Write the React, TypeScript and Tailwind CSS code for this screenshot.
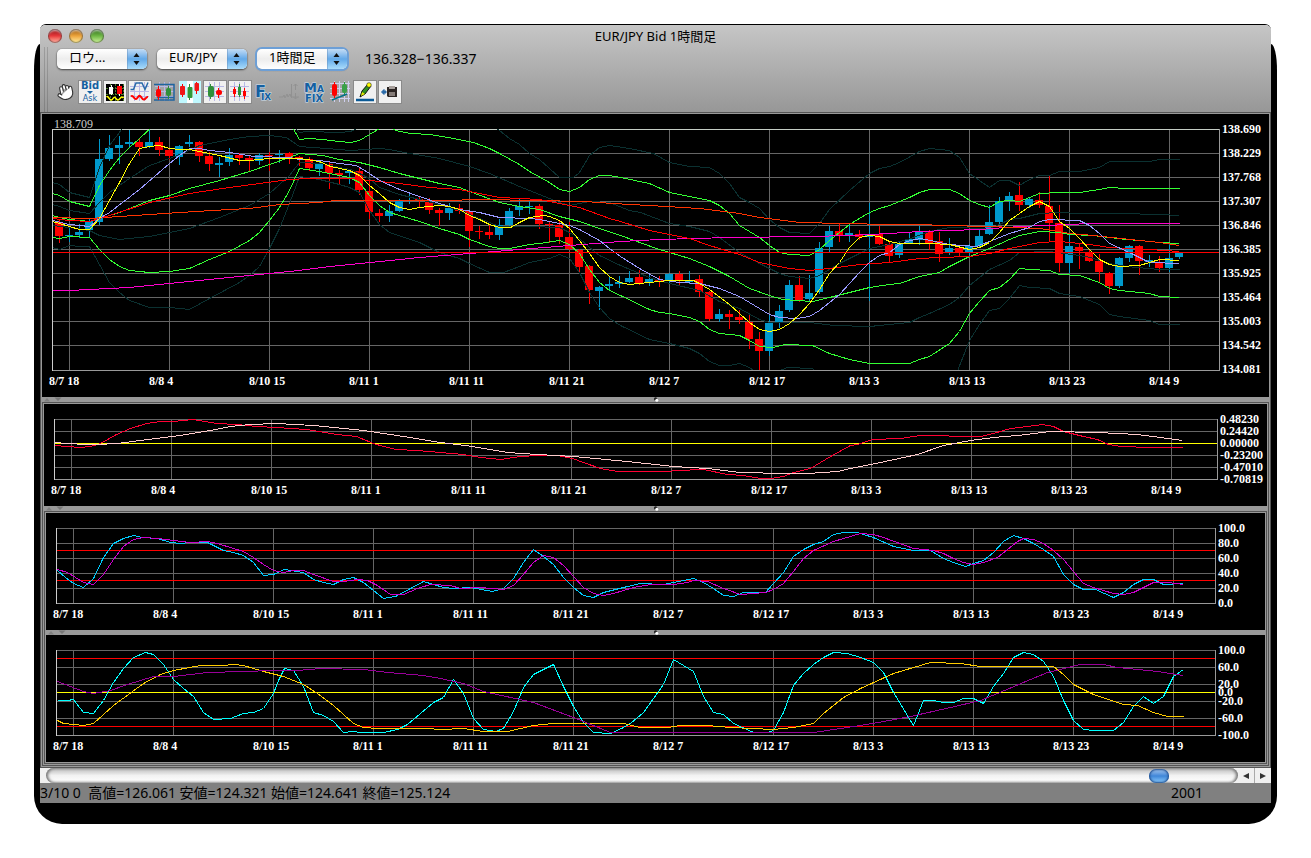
import React from "react";
import type { ReactNode } from "react";
import { Hand } from "lucide-react";

// up / down candles: [type, body top, body bottom, high, low], one every 10px
type Candle = ["u" | "d", number, number, number, number];

const CANDLES: Candle[] = [
  ["d", 222, 236, 220, 243], ["u", 235, 236, 227, 242], ["u", 232, 235, 224, 238], ["u", 221, 230, 219, 237],
  ["u", 159, 222, 139, 225], ["u", 148, 159, 135, 161], ["u", 145, 148, 136, 164], ["u", 142, 144, 130, 147],
  ["d", 142, 147, 138, 156], ["u", 142, 147, 130, 148], ["d", 142, 150, 137, 156], ["d", 150, 156, 148, 160],
  ["u", 146, 157, 145, 165], ["u", 142, 144, 135, 147], ["d", 142, 156, 141, 162], ["d", 156, 164, 152, 171],
  ["u", 163, 165, 157, 177], ["u", 155, 162, 148, 166], ["d", 155, 158, 153, 165], ["d", 158, 161, 156, 171],
  ["u", 155, 161, 153, 165], ["d", 155, 156, 152, 171], ["u", 154, 155, 150, 163], ["d", 153, 158, 152, 164],
  ["d", 157, 158, 156, 166], ["d", 159, 168, 157, 171], ["u", 164, 169, 160, 176], ["d", 164, 173, 162, 189],
  ["d", 173, 175, 170, 184], ["u", 171, 173, 169, 184], ["d", 171, 190, 167, 195], ["d", 191, 212, 180, 219],
  ["d", 213, 216, 209, 222], ["u", 211, 216, 205, 222], ["u", 201, 211, 199, 212], ["u", 200, 201, 193, 204],
  ["d", 199, 200, 196, 207], ["d", 202, 210, 198, 214], ["d", 210, 213, 208, 226], ["u", 208, 213, 203, 220],
  ["d", 208, 211, 204, 214], ["d", 211, 231, 210, 247], ["d", 231, 232, 226, 239], ["d", 232, 235, 225, 239],
  ["u", 225, 235, 219, 240], ["u", 211, 225, 208, 228], ["u", 206, 210, 199, 216], ["u", 206, 207, 201, 214],
  ["d", 206, 224, 204, 229], ["d", 224, 225, 222, 243], ["d", 225, 237, 221, 244], ["d", 237, 249, 222, 250],
  ["d", 250, 267, 249, 272], ["d", 266, 290, 265, 304], ["u", 287, 291, 286, 310], ["u", 284, 286, 277, 291],
  ["u", 282, 284, 276, 288], ["u", 278, 282, 271, 283], ["d", 277, 283, 270, 285], ["u", 279, 282, 273, 286],
  ["d", 280, 282, 276, 287], ["u", 274, 281, 273, 283], ["d", 274, 280, 271, 285], ["u", 280, 282, 271, 284],
  ["d", 279, 292, 275, 297], ["d", 292, 319, 291, 321], ["u", 314, 319, 309, 322], ["d", 314, 317, 310, 329],
  ["d", 317, 320, 310, 324], ["d", 322, 339, 314, 349], ["d", 339, 351, 332, 370], ["u", 323, 351, 315, 356],
  ["u", 311, 323, 305, 328], ["u", 285, 310, 280, 312], ["d", 285, 300, 276, 302], ["u", 293, 299, 275, 302],
  ["u", 248, 292, 242, 294], ["u", 231, 247, 226, 252], ["d", 231, 235, 223, 242], ["u", 233, 235, 225, 242],
  ["d", 234, 237, 230, 240], ["u", 234, 237, 203, 301], ["d", 234, 244, 226, 245], ["d", 244, 256, 242, 262],
  ["u", 244, 255, 242, 258], ["u", 239, 243, 232, 244], ["u", 231, 240, 226, 245], ["d", 231, 243, 230, 250],
  ["d", 241, 254, 232, 262], ["u", 248, 253, 238, 255], ["d", 248, 253, 247, 256], ["u", 246, 252, 244, 257],
  ["u", 236, 246, 229, 247], ["u", 222, 234, 205, 235], ["u", 201, 222, 197, 225], ["u", 196, 201, 192, 211],
  ["d", 195, 205, 182, 211], ["u", 199, 205, 197, 208], ["d", 200, 205, 192, 208], ["d", 206, 223, 175, 242],
  ["d", 223, 263, 205, 272], ["u", 246, 263, 234, 273], ["d", 247, 251, 244, 269], ["d", 252, 261, 250, 262],
  ["d", 261, 272, 254, 282], ["d", 273, 286, 272, 294], ["u", 258, 286, 257, 288], ["u", 246, 258, 245, 262],
  ["d", 246, 261, 245, 275], ["u", 260, 262, 255, 267], ["d", 262, 268, 256, 272], ["u", 258, 268, 245, 272],
  ["u", 253, 257, 252, 259],
];

interface Series {
  color: string;
  points: string;
}

const DARK = "#0b3131";
const GREEN = "#33ff33";

const PRICE_SERIES: Series[] = [
  { color: DARK, points: "52,182 59,184 69,192 89,197 99,167 109,145 119,132 122,127 294,127 299,132 307,131 340,132 350,131 359,127 495,127 499,130 509,138 519,144 529,153 539,159 549,168 559,177 573,177 579,172 589,155 599,147 609,145 629,148 653,153 669,162 689,166 709,167 719,173 729,183 739,197 749,202 759,208 769,219 779,227 789,232 809,233 819,223 829,209 849,190 869,173 879,168 889,166 899,162 919,151 929,148 949,150 959,157 969,173 979,180 989,187 999,180 1009,180 1019,185 1029,179 1039,175 1049,175 1059,171 1079,171 1099,167 1109,161 1149,161 1159,159 1179,159" },
  { color: DARK, points: "52,204 59,206 69,210 89,213 99,202 109,192 129,178 149,165 169,158 189,150 199,145 229,139 249,136 269,135 286,137 299,146 339,149 350,150 379,148 389,149 409,153 439,158 469,166 489,173 519,186 539,194 559,202 569,205 589,201 609,202 629,210 640,212 669,223 689,226 709,231 719,237 739,252 759,263 779,273 789,276 809,278 819,275 839,263 859,253 869,248 889,244 910,238 929,231 949,227 989,228 999,224 1009,219 1019,218 1039,213 1059,212 1079,213 1119,213 1159,214 1179,215" },
  { color: DARK, points: "52,225 69,227 89,230 99,235 119,239 149,236 189,228 219,217 249,205 269,193 289,175 299,162 322,163 339,167 350,169 359,173 369,178 379,187 399,194 419,199 439,204 459,210 479,218 499,226 529,226 559,227 569,232 579,238 589,247 599,255 620,265 649,277 669,283 699,290 719,301 739,308 759,319 769,322 810,322 833,325 869,326 909,322 919,317 929,313 949,304 959,297 969,285 989,269 1009,260 1019,252 1049,251 1079,255 1090,257 1109,263 1126,266 1159,269 1179,269" },
  { color: DARK, points: "52,247 59,249 69,245 79,246 89,246 99,264 109,282 119,292 129,300 149,307 169,307 189,309 209,298 239,282 249,275 259,266 269,248 279,228 289,203 299,176 319,179 339,184 349,187 359,192 369,210 379,224 389,232 419,242 439,252 459,258 469,263 489,272 503,272 519,266 529,262 549,258 559,254 569,258 579,272 589,292 599,307 609,318 620,325 649,339 669,343 689,348 699,353 709,361 719,365 729,365 739,363 749,367 757,373 772,373 787,367 812,368 818,373 956,373 969,340 979,324 989,310 999,308 1009,298 1019,285 1029,287 1049,288 1059,293 1079,296 1099,304 1109,314 1119,316 1149,320 1159,324 1179,324" },
  { color: GREEN, points: "52,193 59,195 69,201 89,206 99,185 109,170 119,157 129,147 139,138 151,127 292,127 299,139 309,138 322,139 339,141 350,142 359,140 369,134 381,127 390,127 395,130 410,133 430,134 453,138 473,142 489,148 499,153 519,164 529,171 549,182 559,189 569,191 579,187 589,179 599,175 609,175 620,177 649,183 669,192 689,196 709,200 719,205 729,213 739,225 759,237 769,245 779,252 789,254 809,255 819,249 829,240 849,224 869,212 879,208 889,205 909,197 919,192 929,189 949,189 959,193 969,200 979,204 989,207 999,201 1009,200 1019,201 1029,197 1039,193 1059,192 1079,192 1099,189 1109,187 1126,188 1179,188" },
  { color: GREEN, points: "52,215 59,217 69,219 89,221 99,218 119,212 149,200 169,195 189,188 219,180 249,171 269,164 289,157 299,153 322,155 339,159 359,162 379,167 399,173 419,178 439,183 459,187 469,191 499,202 519,206 539,209 559,216 579,221 599,228 620,235 656,248 669,252 689,258 709,266 729,276 749,288 769,295 782,299 812,301 829,297 849,292 869,287 889,284 899,283 919,276 939,272 949,266 969,256 989,248 1009,239 1019,235 1039,231 1059,232 1069,234 1092,235 1109,237 1126,239 1139,240 1159,242 1179,243" },
  { color: GREEN, points: "52,237 59,238 69,236 89,237 99,249 109,259 119,266 129,270 149,272 169,271 189,268 209,259 229,251 249,240 259,232 269,220 279,207 289,190 299,168 319,171 339,175 349,177 359,182 369,195 379,205 389,212 409,218 419,221 439,228 459,234 469,239 489,246 499,248 509,248 529,244 539,243 559,240 569,244 579,253 589,269 599,282 609,290 620,295 649,309 659,312 669,313 689,317 699,321 709,329 719,333 739,335 749,340 759,346 772,347 785,344 812,345 829,353 849,359 869,363 909,363 919,359 929,356 949,343 959,331 969,313 979,301 989,290 999,287 1009,279 1019,268 1029,269 1049,270 1059,274 1079,275 1099,282 1109,288 1119,290 1149,293 1159,296 1179,297" },
  { color: "#ff00cc", points: "52,290 69,290 129,287 189,281 249,275 289,271 330,266 419,257 469,253 519,249 569,245 620,241 659,239 729,237 809,236 849,235 889,233 919,231 979,229 1019,226 1069,224 1089,223 1179,223" },
  { color: "#ff3300", points: "52,217 89,218 119,216 179,212 229,209 249,208 279,204 319,202 335,200 440,200 483,199 585,201 597,202 629,204 649,205 699,208 739,213 759,217 799,222 843,223 889,224 919,224 943,225 989,226 1039,228 1069,233 1093,235 1139,240 1159,242 1179,245" },
  { color: "#ff0000", points: "52,218 69,220 89,221 109,215 149,202 189,193 229,187 259,183 289,179 309,178 350,178 369,180 399,183 429,187 459,189 499,197 539,199 579,207 609,218 620,221 649,230 689,238 709,245 739,254 759,262 789,268 809,270 829,268 859,264 889,262 919,258 939,257 969,256 989,253 1009,248 1039,242 1059,241 1089,244 1109,247 1149,249 1179,251" },
  { color: "#9999ff", points: "52,220 69,224 89,226 99,218 109,212 139,189 169,163 179,155 189,148 199,148 209,150 229,152 253,156 289,157 299,159 319,160 339,163 356,165 369,173 379,180 399,189 419,196 439,203 459,209 479,212 499,217 529,218 539,219 569,225 579,229 599,240 609,248 620,256 639,268 659,279 679,282 699,283 719,288 739,296 759,308 769,314 779,317 796,318 809,316 819,310 839,294 859,272 869,262 879,255 889,252 899,244 910,240 920,238 949,244 976,246 989,241 1009,233 1029,227 1039,221 1049,219 1079,220 1089,225 1099,233 1109,243 1129,252 1139,257 1149,262 1179,263" },
  { color: "#ffff00", points: "52,221 59,223 69,226 79,229 89,229 99,218 109,200 119,182 129,163 139,148 149,146 159,145 169,148 179,149 189,149 199,151 219,155 239,160 249,160 269,158 299,158 319,161 330,166 349,170 359,175 369,185 379,193 389,202 399,207 409,209 419,207 439,205 449,206 459,209 469,215 479,219 489,224 499,227 510,227 519,222 529,217 543,215 549,216 559,220 569,228 579,240 589,253 599,267 609,276 619,282 629,284 649,282 669,280 693,280 699,283 709,289 729,304 749,322 759,329 769,331 779,329 789,323 799,314 809,303 819,289 829,273 839,262 849,247 859,237 869,235 879,236 889,241 899,243 930,243 949,244 969,249 979,247 989,242 999,232 1009,220 1019,213 1029,206 1039,201 1049,206 1059,221 1069,228 1079,238 1089,249 1099,259 1109,264 1119,266 1139,265 1159,259 1179,260" },
];

const MACD_SERIES: Series[] = [
  { color: "#ff0033", points: "55,445 66,446 80,447 90,446 100,443 116,434 130,428 146,423 160,421 173,421 193,419 216,423 236,424 256,426 276,427 306,429 336,434 356,436 373,443 383,446 396,449 416,450 440,452 463,454 480,457 500,459 520,456 537,455 557,455 572,458 583,462 600,468 617,471 667,471 677,470 703,469 727,474 743,475 760,478 770,478 783,476 793,472 810,468 830,456 850,445 857,444 872,439 900,438 920,435 937,435 960,436 980,436 993,433 1010,428 1027,426 1042,424 1053,426 1063,431 1083,436 1097,439 1108,444 1120,446 1150,447 1182,447" },
  { color: "#ffcccc", points: "55,442 66,443 87,444 97,444 117,443 147,439 180,435 210,430 230,426 250,424 276,423 313,425 363,430 403,436 440,442 472,446 507,452 537,454 573,456 627,461 673,466 707,468 740,472 783,473 807,473 837,471 850,468 880,462 917,454 943,445 970,440 993,437 1017,435 1050,431 1097,432 1137,434 1160,437 1182,440" },
];

const STOCH_SERIES: Series[] = [
  { color: "#00ccff", points: "57,570 65,577 73,583 83,587 93,578 103,557 113,543 123,538 133,535 142,537 157,538 170,542 180,543 190,542 207,542 223,550 233,552 243,555 253,562 263,575 273,574 284,569 303,572 313,579 323,582 333,584 343,579 353,577 363,582 373,590 383,598 395,596 410,588 423,581 433,584 443,587 453,588 470,587 492,591 503,588 513,578 523,562 533,549 543,556 553,564 563,577 573,587 583,595 593,597 603,592 623,587 640,583 663,584 673,582 693,578 703,582 713,588 723,595 733,596 743,592 765,592 773,583 783,572 793,556 803,549 813,544 823,541 833,534 843,532 857,532 863,534 873,537 893,546 913,550 930,550 943,558 953,562 965,566 973,563 983,560 993,552 1003,541 1013,535 1023,538 1033,543 1043,549 1053,556 1063,574 1073,584 1083,589 1095,589 1113,597 1123,592 1133,584 1143,579 1153,579 1163,584 1183,583" },
  { color: "#cc00cc", points: "57,569 67,572 83,582 93,584 103,574 113,559 123,546 133,539 143,537 157,538 190,542 207,541 217,543 233,548 243,551 253,557 263,564 273,570 283,572 293,570 303,570 313,574 333,581 343,581 357,579 367,580 377,585 390,594 403,594 417,588 430,584 450,585 460,588 480,587 503,589 513,585 523,574 533,562 543,555 553,557 563,565 573,576 583,587 593,593 603,595 613,593 633,587 650,584 673,584 687,582 693,580 707,581 723,588 740,594 765,592 773,589 783,583 793,571 803,558 813,550 833,541 860,533 873,534 883,537 913,548 933,550 943,553 953,558 963,562 973,564 983,562 997,557 1007,549 1017,541 1023,538 1033,539 1043,543 1053,550 1063,559 1073,571 1083,583 1093,587 1113,593 1123,594 1133,592 1153,582 1167,582 1183,584" },
];

const RCI_SERIES: Series[] = [
  { color: "#00ffff", points: "57,700 67,700 73,699 83,712 93,713 103,700 113,682 123,668 133,657 145,652 153,654 163,664 173,679 183,688 193,696 203,712 213,719 230,718 243,713 253,712 263,708 273,693 278,680 284,668 293,670 303,686 313,712 323,715 333,721 343,732 353,731 360,732 383,732 397,729 407,724 420,713 433,702 443,697 453,679 463,693 473,718 483,729 495,731 503,728 513,711 523,687 533,674 553,664 563,686 573,706 583,722 593,732 610,733 623,727 630,723 643,712 663,684 673,659 693,671 703,696 713,712 723,714 733,723 753,732 767,732 773,730 783,712 793,685 803,673 813,664 823,657 833,652 847,653 860,657 873,662 883,672 893,692 913,725 923,700 933,700 943,702 953,702 963,698 973,698 983,703 993,686 1003,673 1013,657 1023,652 1033,654 1043,661 1053,676 1063,700 1073,720 1083,729 1093,730 1113,730 1123,722 1133,706 1143,696 1153,703 1163,696 1173,676 1183,669" },
  { color: "#ffcc00", points: "57,720 63,723 83,725 93,723 113,705 143,683 160,674 173,670 200,665 223,665 233,664 243,665 263,671 283,676 303,684 317,693 333,705 353,723 363,727 377,728 427,728 440,729 463,728 483,731 507,731 533,725 553,723 623,723 640,727 667,727 680,725 707,725 730,727 773,729 793,727 813,723 823,713 843,697 860,688 893,673 930,662 960,663 980,666 1053,666 1063,674 1073,684 1093,694 1123,704 1137,705 1153,712 1167,716 1183,716" },
  { color: "#990099", points: "57,681 83,691 93,693 110,690 127,684 153,676 173,676 207,672 243,671 273,670 297,670 320,668 363,669 387,672 423,675 440,678 463,683 483,691 533,702 573,717 610,732 813,732 840,728 860,725 883,721 910,716 950,707 980,700 997,693 1030,679 1047,672 1080,664 1103,664 1117,667 1157,671 1183,675" },
];

const TIMES = ["8/7 18", "8/8 4", "8/10 15", "8/11 1", "8/11 11", "8/11 21", "8/12 7", "8/12 17", "8/13 3", "8/13 13", "8/13 23", "8/14 9"];

interface ChartProps {
  title: string;
  viewBox: string;
  left: number;
  right: number;
  firstX: number;
  rows: number[];
  labels: [string, number][];
  levels?: [string, number][];
  series: Series[];
  topColor?: string;
  high?: string;
  children?: ReactNode;
}

function Chart({ title, viewBox, left, right, firstX, rows, labels, levels = [], series, topColor = "#666666", high, children }: ChartProps) {
  const top = rows[0];
  const bottom = rows[rows.length - 1];
  const clip = `clip-${title}`;
  return (
    <svg role="img" aria-label={title} viewBox={viewBox} className="block h-auto w-full bg-black font-['Liberation_Serif',serif] text-[12px] font-bold">
      <clipPath id={clip}>
        <rect x={left + 1} y={top} width={right - left} height={bottom - top} />
      </clipPath>
      <g shapeRendering="crispEdges">
        {rows.slice(1, -1).map((y) => (
          <rect key={y} x={left} y={y} width={right - left} height="1" fill="#666666" />
        ))}
        {TIMES.map((t, i) => (
          <rect key={t} x={firstX + i * 100} y={top} width="1" height={bottom - top} fill="#666666" />
        ))}
        <rect x={left} y={top} width={right - left + 1} height="1" fill={topColor} />
        <rect x={left} y={bottom} width={right - left + 1} height="1" fill="#999999" />
        <rect x={right} y={top} width="1" height={bottom - top} fill="#999999" />
        <rect x={left} y={top} width="1" height={bottom - top + 1} fill="#cccccc" />
        {title !== "price" &&
          levels.map(([color, y]) => <rect key={y} x={left + 1} y={y} width={right - left - 1} height="1" fill={color} />)}
        <g clipPath={`url(#${clip})`}>
          {children}
          <g fill="none" strokeWidth="1" transform="translate(0.5 0.5)">
            {series.map((s, i) => (
              <polyline key={i} points={s.points} stroke={s.color} />
            ))}
          </g>
        </g>
        {title === "price" &&
          levels.map(([color, y]) => <rect key={y} x={left + 1} y={y} width={right - left - 1} height="1" fill={color} />)}
      </g>
      {high && (
        <text x={left + 2} y={top - 1} fill="#cccccc" className="font-normal">
          {high}
        </text>
      )}
      {TIMES.map((t, i) => (
        <text key={t} x={firstX - 20 + i * 100} y={bottom + 15} fill="#ffffff">
          {t}
        </text>
      ))}
      {labels.map(([label, y]) => (
        <text key={label} x={right + 3} y={y + 4} fill="#ffffff">
          {label}
        </text>
      ))}
    </svg>
  );
}

function Candles() {
  return (
    <>
      {CANDLES.map(([type, top, bottom, high, low], i) => {
        const x = 59 + i * 10;
        return (
          <g key={i} fill={type === "u" ? "#0099cc" : "#ff0000"}>
            <rect x={x} y={high} width="1" height={low - high} />
            <rect x={x - 4} y={top} width="8" height={Math.max(bottom - top, 1)} />
          </g>
        );
      })}
    </>
  );
}

/* Bevelled frame round every level of the nested split panes */
function Pane({ children }: { children: ReactNode }) {
  return (
    <div className="border border-[#555555]">
      <div className="border border-[#999999]">{children}</div>
    </div>
  );
}

function Divider() {
  return (
    <div role="separator" className="grid h-[5px] grid-cols-[1fr_auto_1fr] items-center bg-[#999999]">
      <svg width="20" height="5" viewBox="0 0 20 5" className="block">
        <path d="M2 4.5 5 1l3 3.5z" fill="#808080" />
        <path d="M12.5 .5h7L16 4z" fill="#777777" />
      </svg>
      <svg width="6" height="5" viewBox="0 0 6 5" className="block">
        <circle cx="2.6" cy="2" r="1.7" fill="#222222" />
        <circle cx="3.8" cy="3.2" r="1.5" fill="#ffffff" />
      </svg>
    </div>
  );
}

function PopUp({ label, value, focused = false }: { label: string; value: string; focused?: boolean }) {
  return (
    <div
      className={
        "relative h-5 w-[90px] rounded-[5px] bg-gradient-to-b from-white via-[#ededed] to-white " +
        (focused ? "shadow-[0_0_0_2px_#6d9fd6,0_1px_2px_#333333]" : "shadow-[0_1px_2px_#444444,0_0_1px_#555555]")
      }
    >
      <select aria-label={label} className="block h-5 w-full appearance-none bg-transparent pb-1 pl-3 pr-5 text-[13px] leading-4 text-black outline-none">
        <option>{value}</option>
      </select>
      <svg
        viewBox="0 0 20 20"
        className="pointer-events-none absolute right-0 top-0 h-5 w-5 rounded-r-[5px] bg-gradient-to-b from-[#c3dcf5] via-[#62a9e9] to-[#a9dcfb]"
      >
        <path d="M0 0v20" stroke="#6a93bf" />
        <path d="M9.500 4 12.500 8h-6zM9.500 16l3-4h-6z" fill="#111111" />
      </svg>
    </div>
  );
}

const GRID = <path d="M2 6.500h19M2 11.500h19M2 16.500h19M6.500 2v19M11.500 2v19M16.500 2v19" stroke="#b9b9e6" fill="none" />;

const TOOLS: { name: string; boxed?: boolean; icon: ReactNode }[] = [
  {
    name: "Bid/Ask",
    boxed: true,
    icon: (
      <g fill="#1560a0" fontFamily="'DejaVu Sans', sans-serif" textAnchor="middle">
        <text x="12" y="9" fontSize="10" fontWeight="bold">Bid</text>
        <path d="M9 11h6l-3 3z" />
        <text x="12" y="21" fontSize="8">Ask</text>
      </g>
    ),
  },
  {
    name: "Chart settings",
    boxed: true,
    icon: (
      <>
        <rect x="3" y="4" width="18" height="17" fill="#000000" />
        <path d="M3 8.500h18M3 14.500h18M7.500 4v17M12.500 4v17M20.500 4v17" stroke="#4a7a28" strokeDasharray="2 1" />
        <path d="M8.500 5v10M16.500 4v12" stroke="#ffffff" />
        <rect x="6" y="7" width="4" height="7" fill="#ffffff" />
        <rect x="14" y="6" width="5" height="8" fill="#ff0000" />
        <path d="M3.500 17c2-2 3 4 5 3s2-4 4-2 2 3 4 1 2-3 4-1" stroke="#ffff00" strokeWidth="1.500" fill="none" />
      </>
    ),
  },
  {
    name: "Sub chart",
    boxed: true,
    icon: (
      <>
        {GRID}
        <path d="M2.500 9.500h3L8 3h6l3 6.500 3-7" stroke="#2a6aa8" strokeWidth="1.500" fill="none" />
        <path d="M3 16.500c2-2 3 3 5 2.500s2-4 4-3 2 4 4 3.500 2-3 4-2.500" stroke="#ff0000" strokeWidth="2" fill="none" />
      </>
    ),
  },
  {
    name: "Frame",
    icon: (
      <>
        {GRID}
        <path d="M1 4.500h20V20H1M4 17.500h17" stroke="#1f64a0" strokeWidth="1.500" fill="none" />
        <path d="M5.500 6v14" stroke="#ff0000" />
        <rect x="3" y="9" width="5" height="8" rx="2" fill="#ff0000" />
        <path d="M15.500 6v13" stroke="#2f8f3a" />
        <rect x="13" y="8" width="5" height="8" rx="2" fill="#2f8f3a" />
      </>
    ),
  },
  {
    name: "Candles",
    icon: (
      <>
        <rect x="1" y="1" width="22" height="22" fill="#bff8ff" />
        <rect x="9" y="1" width="6" height="22" fill="#ffffff" />
        <path d="M4.500 4v13M18.500 2v12" stroke="#ff0000" />
        <rect x="2" y="6" width="5" height="9" rx="1" fill="#f01818" />
        <path d="M11.500 4v16" stroke="#2f8f3a" />
        <rect x="9.500" y="7" width="5" height="11" rx="1" fill="#2f9a3a" />
        <rect x="16.500" y="3" width="4.500" height="8" rx="1" fill="#f01818" />
      </>
    ),
  },
  {
    name: "Zoom in",
    boxed: true,
    icon: (
      <>
        {GRID}
        <path d="M7.500 4v15" stroke="#2f8f3a" />
        <path d="M15.500 8v10" stroke="#ff0000" />
        <rect x="5" y="6" width="6" height="11" rx="2" fill="#2f8f3a" />
        <rect x="13" y="10" width="6" height="5" rx="2" fill="#ff0000" />
      </>
    ),
  },
  {
    name: "Zoom out",
    boxed: true,
    icon: (
      <>
        {GRID}
        <path d="M6.500 7v10M16.500 8v11" stroke="#ff0000" />
        <path d="M11.500 4v13" stroke="#2f8f3a" />
        <rect x="5" y="9" width="3" height="5" fill="#ff0000" />
        <rect x="10" y="7" width="3" height="8" fill="#2f8f3a" />
        <rect x="15" y="11" width="3" height="5" fill="#ff0000" />
      </>
    ),
  },
  {
    name: "Fix",
    icon: (
      <text x="2" y="17" fill="#1560a0" stroke="#cfe0f0" strokeWidth="1" paintOrder="stroke" fontFamily="'DejaVu Sans', sans-serif" fontWeight="bold" fontSize="16">
        F
        <tspan dx="-5" dy="3" fontSize="9">IX</tspan>
      </text>
    ),
  },
  {
    name: "Scale",
    icon: (
      <g stroke="#919191" fill="none">
        <path d="M1 17h4l1-2 1 3 2-4 1 3 2-3 1 3h8M13.500 4v14M17.500 4v6M15.500 6l2-2 2 2M17.500 13v6M15.500 17l2 2 2-2" />
      </g>
    ),
  },
  {
    name: "MA Fix",
    icon: (
      <g fill="#1560a0" stroke="#cfe0f0" strokeWidth="1" paintOrder="stroke" fontFamily="'DejaVu Sans', sans-serif" fontWeight="bold">
        <text x="1" y="12" fontSize="13">
          M<tspan fontSize="9">A</tspan>
        </text>
        <text x="2" y="22" fontSize="10">FIX</text>
      </g>
    ),
  },
  {
    name: "Trend lines",
    icon: (
      <>
        <path d="M2 3.500h20M2 8.500h20M2 13.500h20M2 18.500h20M6.500 1v21M11.500 1v21M16.500 1v21M20.500 1v21" stroke="#cfcfee" />
        <path d="M6.500 2v16" stroke="#ff0000" />
        <rect x="4" y="4" width="5" height="12" rx="2" fill="#ff0000" />
        <path d="M16.500 2v14" stroke="#2f9a3a" />
        <rect x="14" y="4" width="5" height="9" rx="2" fill="#3aa048" />
        <path d="M4 20 19 14" stroke="#00708a" strokeWidth="1.500" />
      </>
    ),
  },
  {
    name: "Draw",
    boxed: true,
    icon: (
      <>
        <path d="M3 20h18" stroke="#0a5a96" strokeWidth="2.500" />
        <path d="M7 17l2-6 6-7 3 2-6 8z" fill="#2f8f1f" stroke="#111111" />
        <circle cx="16" cy="5" r="2.300" fill="#ffff00" stroke="#222222" strokeWidth=".6" />
        <path d="M9 12l3 2-4 2z" fill="#e8e800" />
      </>
    ),
  },
  {
    name: "Save",
    boxed: true,
    icon: (
      <>
        <path d="M3.500 12 6 9.500v5zM6 11h2v2H6z" fill="#2a6aa8" stroke="#2a6aa8" />
        <path d="M9 7h10v10h-9l-1-1z" fill="#2b2422" />
        <rect x="11" y="6" width="6" height="3" fill="#a8a09c" />
        <rect x="11" y="12" width="6" height="4" fill="#857c78" />
      </>
    ),
  },
];

function Grip() {
  return <div className="mr-1 w-1 self-stretch border-x border-x-black/15" />;
}

const LIGHTS = [
  { name: "Close", style: "from-[#8e1418] via-[#e8383c] to-[#ffb3a8]" },
  { name: "Minimize", style: "from-[#9a5a10] via-[#eda53c] to-[#fff3a0]" },
  { name: "Zoom", style: "from-[#2f6a1c] via-[#6fb845] to-[#d4f7a0]" },
];

export default function App() {
  return (
    <div className="bg-white px-[34px] pt-6 pb-8 font-['Noto_Sans','Noto_Sans_CJK_JP',sans-serif] text-black">
      <div className="relative px-[6px] pb-[21px]">
        {/* hard black shadow, starts a little below the title bar */}
        <div className="absolute inset-x-0 top-5 bottom-0 rounded-[6px_6px_28px_28px/26px_26px_28px_28px] bg-black" />
        <div className="relative overflow-hidden rounded-t-[6px] border-t border-black">
          <header className="bg-gradient-to-b from-[#c6c6c6] to-[#979797]">
            <div className="grid h-[22px] grid-cols-[1fr_auto_1fr] items-center">
              <div className="flex gap-[7px] pl-2">
                {LIGHTS.map((l) => (
                  <button key={l.name} aria-label={l.name} className={"h-3.5 w-3.5 rounded-full bg-gradient-to-b shadow-[inset_0_0_1px_1px_#00000066,inset_0_3px_2px_-1px_#ffffffaa] " + l.style} />
                ))}
              </div>
              <h1 className="text-[13px] leading-5">EUR/JPY Bid 1時間足</h1>
            </div>

            <div className="flex h-6 items-center pl-1">
              <Grip />
              <div className="flex gap-2.5 pl-[5px]">
                <PopUp label="チャート種別" value="ロウ..." />
                <PopUp label="通貨ペア" value="EUR/JPY" />
                <PopUp label="足種" value="1時間足" focused />
              </div>
              <span className="pl-[18px] text-[14px] leading-5">136.328−136.337</span>
            </div>

            <div className="flex h-[41px] items-center gap-px pl-1">
              <Grip />
              <button aria-label="Move" className="flex h-6 w-6 items-center justify-center">
                <Hand size={18} fill="#ffffff" stroke="#333333" strokeWidth={1.5} className="-rotate-12" />
              </button>
              {TOOLS.map((tool) => (
                <button key={tool.name} aria-label={tool.name} className={"h-6 w-6 " + (tool.boxed ? "bg-[#f0f0f0] shadow-[inset_0_0_0_1px_#8a8a8a]" : "")}>
                  <svg viewBox="0 0 24 24" className="block h-6 w-6">
                    {tool.icon}
                  </svg>
                </button>
              ))}
            </div>
          </header>

          <main>
            <Pane>
              <Chart
                title="price"
                viewBox="42 114 1227 283"
                left={52}
                right={1219}
                firstX={69}
                rows={[129, 153, 177, 201, 225, 249, 273, 297, 321, 345, 370]}
                labels={[["138.690", 129], ["138.229", 153], ["137.768", 177], ["137.307", 201], ["136.846", 225], ["136.385", 249], ["135.925", 273], ["135.464", 297], ["135.003", 321], ["134.542", 345], ["134.081", 369]]}
                levels={[["#ff0000", 252]]}
                series={PRICE_SERIES}
                topColor="#c4ccc4"
                high="138.709"
              >
                <Candles />
              </Chart>
              <Divider />
              <Pane>
                <Chart
                  title="macd"
                  viewBox="44 404 1223 102"
                  left={54}
                  right={1217}
                  firstX={71}
                  rows={[419, 431, 443, 455, 467, 479]}
                  labels={[["0.48230", 419], ["0.24420", 431], ["0.00000", 443], ["-0.23200", 455], ["-0.47010", 467], ["-0.70819", 479]]}
                  levels={[["#ffff00", 443]]}
                  series={MACD_SERIES}
                />
                <Divider />
                <Pane>
                  <Chart
                    title="stochastics"
                    viewBox="46 513 1219 117"
                    left={56}
                    right={1215}
                    firstX={73}
                    rows={[528, 543, 558, 573, 588, 603]}
                    labels={[["100.0", 528], ["80.0", 543], ["60.0", 558], ["40.0", 573], ["20.0", 588], ["0.0", 603]]}
                    levels={[["#ff0000", 550], ["#ff0000", 580]]}
                    series={STOCH_SERIES}
                  />
                  <Divider />
                  <Chart
                    title="rci"
                    viewBox="46 635 1219 127"
                    left={56}
                    right={1215}
                    firstX={73}
                    rows={[650, 667, 684, 701, 718, 735]}
                    labels={[["100.0", 650], ["60.0", 667], ["20.0", 684], ["0.0", 692], ["-20.0", 701], ["-60.0", 718], ["-100.0", 735]]}
                    levels={[["#ff0000", 658], ["#ffff00", 692], ["#ff0000", 726]]}
                    series={RCI_SERIES}
                  />
                </Pane>
              </Pane>
            </Pane>
          </main>

          <div className="flex h-[15px] bg-[#f0f0f0] pl-[6px]">
            <input
              type="range"
              aria-label="Scroll"
              min={0}
              max={1000}
              defaultValue={941}
              className="h-[15px] min-w-0 flex-1 appearance-none rounded-full bg-gradient-to-b from-[#b8b8b8] via-[#f2f2f2] to-white shadow-[inset_2px_0_3px_#777777,inset_-2px_0_3px_#777777] [&::-webkit-slider-thumb]:h-3.5 [&::-webkit-slider-thumb]:w-5 [&::-webkit-slider-thumb]:appearance-none [&::-webkit-slider-thumb]:rounded-full [&::-webkit-slider-thumb]:bg-linear-to-b [&::-webkit-slider-thumb]:from-[#a8c8ee] [&::-webkit-slider-thumb]:via-[#3f86d8] [&::-webkit-slider-thumb]:to-[#8fd0ff] [&::-webkit-slider-thumb]:shadow-[inset_0_0_2px_1px_#1d4a8a]"
            />
            <button aria-label="Scroll left" className="flex w-4 items-center justify-center">
              <svg viewBox="0 0 6 6" className="h-1.5 w-1.5"><path d="M6 0v6L0 3z" fill="#333333" /></svg>
            </button>
            <button aria-label="Scroll right" className="flex w-[17px] items-center justify-center border-l border-[#aaaaaa]">
              <svg viewBox="0 0 6 6" className="h-1.5 w-1.5"><path d="M0 0v6l6-3z" fill="#333333" /></svg>
            </button>
          </div>

          <footer className="flex h-5 items-center justify-between bg-[#808080] pr-[68px] text-[14px] leading-5">
            <span className="whitespace-pre">3/10 0  高値=126.061 安値=124.321 始値=124.641 終値=125.124</span>
            <span>2001</span>
          </footer>
        </div>
      </div>
    </div>
  );
}
